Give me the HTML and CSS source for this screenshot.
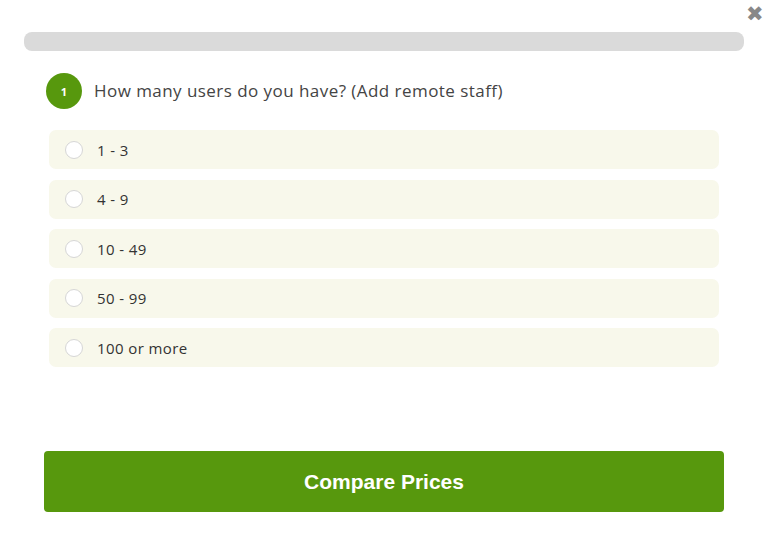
FILE: index.html
```html
<!DOCTYPE html>
<html lang="en">
<head>
    <meta charset="UTF-8">
    <meta name="viewport" content="width=device-width, initial-scale=1.0">
    <title>Compare Prices</title>
    <link rel="stylesheet" href="styles.css">
</head>
<body>
    <div class="modal">
        <button class="close" aria-label="Close">&#10006;</button>
        <div class="progress"></div>
        <div class="question">
            <span class="step">1</span>
            <span class="question-text">How many users do you have? (Add remote staff)</span>
        </div>
        <div class="options">
            <label class="option"><span class="radio"></span>1 - 3</label>
            <label class="option"><span class="radio"></span>4 - 9</label>
            <label class="option"><span class="radio"></span>10 - 49</label>
            <label class="option"><span class="radio"></span>50 - 99</label>
            <label class="option"><span class="radio"></span>100 or more</label>
        </div>
        <button class="submit">Compare Prices</button>
    </div>
</body>
</html>
```

FILE: styles.css
```css
body {
    margin: 0;
    padding: 0;
    background: white;
    font-family: "Open Sans", Lato, sans-serif;
}
.modal {
    position: relative;
    width: 770px;
    height: 553px;
    padding: 32px 0 0 24px;
    box-sizing: border-box;
}
.close {
    position: absolute;
    top: 2px;
    right: 6px;
    background: none;
    border: none;
    padding: 0;
    font-size: 21px;
    line-height: 24px;
    color: #888;
    cursor: pointer;
}
.progress {
    width: 720px;
    height: 19px;
    background: #dadada;
    border-radius: 8px;
}
.question {
    display: flex;
    align-items: center;
    margin: 22px 0 0 22px;
}
.step {
    width: 36px;
    height: 36px;
    border-radius: 50%;
    background: #57980d;
    color: white;
    font-size: 11px;
    font-weight: bold;
    display: flex;
    align-items: center;
    justify-content: center;
}
.question-text {
    margin-left: 12px;
    font-size: 17px;
    letter-spacing: 0.45px;
    color: #444;
    position: relative;
    top: -1px;
}
.options {
    display: flex;
    flex-direction: column;
    gap: 10.5px;
    margin: 21px 0 0 25px;
    width: 670px;
}
.option {
    display: flex;
    align-items: center;
    height: 39px;
    padding-left: 16px;
    background: #f8f8eb;
    border-radius: 7px;
    font-size: 15px;
    letter-spacing: 0.4px;
    color: #333;
    cursor: pointer;
}
.radio {
    width: 16px;
    height: 16px;
    border: 1px solid #d6d6d6;
    border-radius: 50%;
    background: white;
    margin-right: 14px;
}
.submit {
    display: block;
    margin: 84px 0 0 20px;
    width: 680px;
    height: 61px;
    background: #57980d;
    color: white;
    border: none;
    border-radius: 4px;
    font-family: "Liberation Sans", Arial, sans-serif;
    font-size: 21px;
    font-weight: bold;
    cursor: pointer;
}
```
